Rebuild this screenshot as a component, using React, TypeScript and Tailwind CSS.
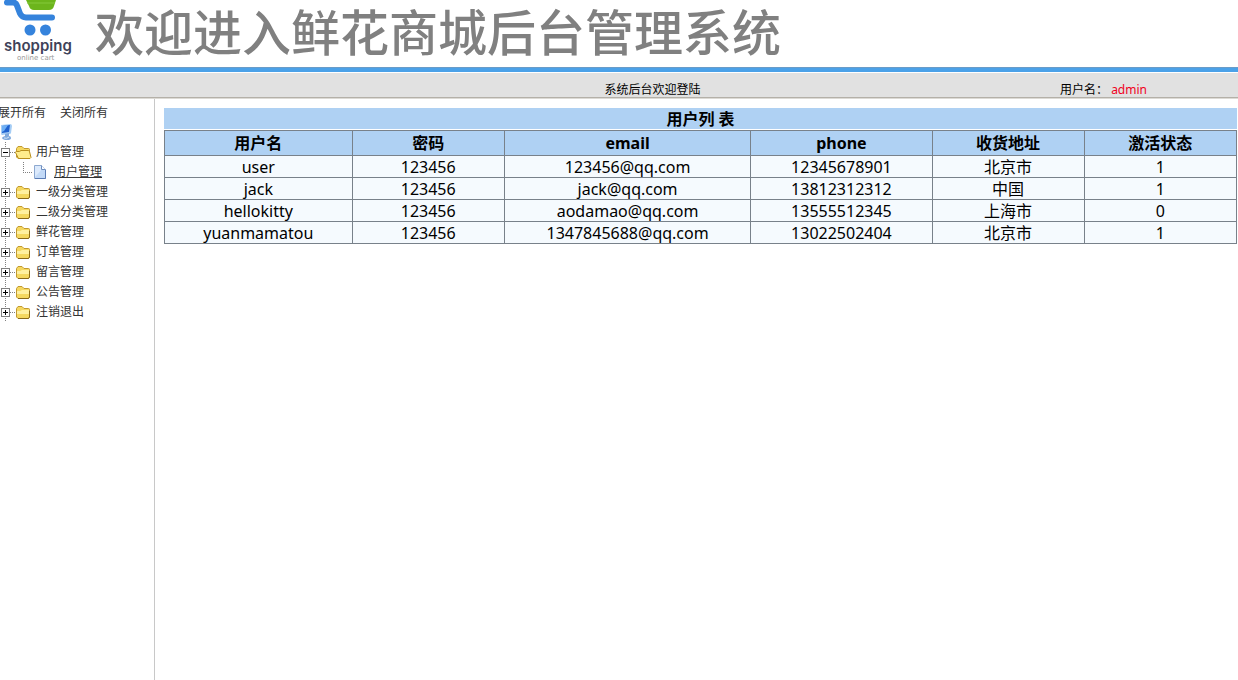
import { useState } from "react";

const users = [
    { name: "user", password: "123456", email: "123456@qq.com", phone: "12345678901", address: "北京市", active: 1 },
    { name: "jack", password: "123456", email: "jack@qq.com", phone: "13812312312", address: "中国", active: 1 },
    { name: "hellokitty", password: "123456", email: "aodamao@qq.com", phone: "13555512345", address: "上海市", active: 0 },
    { name: "yuanmamatou", password: "123456", email: "1347845688@qq.com", phone: "13022502404", address: "北京市", active: 1 },
];

// column title + share of the table width
const columns = [
    { title: "用户名", width: "w-[17.5%]" },
    { title: "密码", width: "w-[14.2%]" },
    { title: "email", width: "w-[23%]" },
    { title: "phone", width: "w-[16.9%]" },
    { title: "收货地址", width: "w-[14.2%]" },
    { title: "激活状态", width: "w-[14.2%]" },
];

const menus = [
    { title: "用户管理", children: ["用户管理"] },
    { title: "一级分类管理", children: [] },
    { title: "二级分类管理", children: [] },
    { title: "鲜花管理", children: [] },
    { title: "订单管理", children: [] },
    { title: "留言管理", children: [] },
    { title: "公告管理", children: [] },
    { title: "注销退出", children: [] },
];

function Logo() {
    return (
        <svg width="76" height="67" viewBox="0 0 76 67" role="img" aria-label="shopping online cart">
            <path d="M26 0h30l-2 6q-1 4-5 4H34q-4 0-5-4z" fill="#6cb51c" />
            <path d="M27 3h28" stroke="#84c93a" />
            <path d="M7 2.500h6q3 0 4 3l3 8q2 4 6 4h26" fill="none" stroke="#3583dc" strokeWidth="6" strokeLinecap="round" strokeLinejoin="round" />
            <circle cx="30" cy="30" r="5.500" fill="#3583dc" />
            <circle cx="45.500" cy="30" r="5.500" fill="#3583dc" />
            <text x="4" y="51" fontSize="15" fontWeight="600" fill="#3e4259" fontFamily="Inter, sans-serif">shopping</text>
            <text x="17" y="60" fontSize="7" fill="#999" fontFamily="'DejaVu Sans', sans-serif">online cart</text>
        </svg>
    );
}

function Computer() {
    return (
        <svg width="14" height="18" viewBox="0 0 14 18" aria-hidden="true">
            <path d="M1 2l9-1q2 0 2 2l-1 7q0 1-2 1l-7 1q-1 0-1-2z" fill="#a5cdf5" />
            <path d="M2 3l8-1-1 7-7 1z" fill="#1f62cf" />
            <path d="M2 3l6-1-4 6-2 1z" fill="#6eb0f5" />
            <path d="M5 11l4-1v3q2 0 2 2 0 2-4 2t-5-2q0-1 3-2z" fill="#7fa9dc" />
            <path d="M4 15q3 1 5-1" fill="none" stroke="#d5e6f8" />
        </svg>
    );
}

function Folder({ open }: { open: boolean }) {
    return (
        <svg width="18" height="18" viewBox="0 0 18 18" aria-hidden="true">
            <path d="M1.500 14V5.500l1.500-2h4l2 2h4.500q1 0 1 1V14l-1 1.500H3z" fill="#f5d860" stroke="#c29a30" />
            {open ? (
                <path d="M.5 9.500q0-1 1-1h3l1.500-1h7q1 0 1.500 1l1.500 6-1 1H3.500z" fill="#ffec8c" stroke="#b88e1e" />
            ) : (
                <>
                    <path d="M2 8h3l2-1h7v4H2z" fill="#fff0a0" />
                    <path d="M3 15.500h10.500l1-1.500V8" fill="none" stroke="#8a6a18" />
                </>
            )}
        </svg>
    );
}

function Page() {
    return (
        <svg width="18" height="18" viewBox="0 0 18 18" aria-hidden="true">
            <path d="M2.500 2.500h7l4 4v9h-11z" fill="#dceafc" stroke="#8ea9d0" />
            <path d="M3 14l8-9 2 3v7H3z" fill="#c3daf7" />
            <path d="M9.500 2.500v4h4" fill="#fff" stroke="#6f8fc0" />
            <path d="M3 15.500h10.500V7" fill="none" stroke="#5c7db5" />
        </svg>
    );
}

function PlusMinus({ open }: { open: boolean }) {
    return (
        <svg width="15" height="20" viewBox="0 0 15 20" aria-hidden="true" shapeRendering="crispEdges">
            <path d="M5.500 0v20M10 10.500h5" stroke="#808080" strokeDasharray="1 1" />
            <path d="M1.500 6.500h8v8h-8z" fill="#fff" stroke="#808080" />
            <path d={open ? "M3 10.500h5" : "M3 10.500h5M5.500 8v5"} stroke="#000" />
        </svg>
    );
}

export default function App() {
    const [opened, setOpened] = useState<number[]>([0]);

    function toggle(index: number) {
        setOpened(opened.includes(index) ? opened.filter((i) => i !== index) : [...opened, index]);
    }

    return (
        <div className="flex min-h-screen flex-col bg-white font-['Noto_Sans','Noto_Sans_CJK_SC',sans-serif] text-black">
            <header>
                <div className="flex h-[67px] items-start overflow-hidden">
                    <Logo />
                    <h1 className="ml-[19px] text-[49px] leading-[64px] whitespace-nowrap text-[#808080] font-medium">欢迎进入鲜花商城后台管理系统</h1>
                </div>
                <div className="h-[5px] border-t border-[#6a9cc8] bg-[#4ba1e8]" />
                <div className="mt-px grid h-[25px] grid-cols-[1fr_auto_1fr] items-end border-b border-[#b4b0a8] bg-[#e1e1e1] text-xs">
                    <span />
                    <span className="ml-[67px] leading-[14px]">系统后台欢迎登陆</span>
                    <span className="pr-[91px] text-right leading-[14px]">用户名： <span className="text-[#f00020]">admin</span></span>
                </div>
            </header>

            <div className="flex grow border-t border-[#dcdad5]">
                {/* MENU TREE */}
                <nav className="w-[155px] shrink-0 border-r border-[#c8c8c8] text-xs text-[#333]">
                    <div className="-ml-0.5 flex h-6 items-end gap-3.5">
                        <button className="leading-5" onClick={() => setOpened(menus.map((_, i) => i))}>展开所有</button>
                        <button className="leading-5" onClick={() => setOpened([])}>关闭所有</button>
                    </div>
                    <div className="h-[19px]"><Computer /></div>
                    <ul>
                        {menus.map((menu, i) => (
                            <li key={menu.title}>
                                <button className="flex h-5 items-center" onClick={() => toggle(i)} aria-expanded={opened.includes(i)}>
                                    <PlusMinus open={opened.includes(i)} />
                                    <Folder open={opened.includes(i)} />
                                    <span className="ml-[3px]">{menu.title}</span>
                                </button>
                                {opened.includes(i) && menu.children.map((child) => (
                                    <div key={child} className="flex h-5 items-center">
                                        <svg width="32" height="20" viewBox="0 0 32 20" aria-hidden="true" shapeRendering="crispEdges">
                                            <path d="M5.500 0v20M23.500 0v10.500h9" fill="none" stroke="#808080" strokeDasharray="1 1" />
                                        </svg>
                                        <Page />
                                        <a href="#users" className="ml-1 underline">{child}</a>
                                    </div>
                                ))}
                            </li>
                        ))}
                    </ul>
                </nav>

                {/* USER LIST */}
                <main className="grow pt-[9px] pr-px pl-[9px]">
                    <h2 className="h-[21px] bg-[#afd1f3] text-center text-base leading-[22px] font-bold">用户列 表</h2>
                    <table className="mt-px w-full table-fixed border-collapse bg-[#f5fafe] text-center text-base leading-5">
                        <thead>
                            <tr className="h-[25px] bg-[#afd1f3]">
                                {columns.map((column) => (
                                    <th key={column.title} className={`${column.width} border border-[#78818a] p-0 font-bold`}>{column.title}</th>
                                ))}
                            </tr>
                        </thead>
                        <tbody>
                            {users.map((user) => (
                                <tr key={user.name} className="h-[22px]">
                                    {Object.values(user).map((value, i) => (
                                        <td key={i} className="border border-[#78818a] p-0 pt-px">{value}</td>
                                    ))}
                                </tr>
                            ))}
                        </tbody>
                    </table>
                </main>
            </div>
        </div>
    );
}
